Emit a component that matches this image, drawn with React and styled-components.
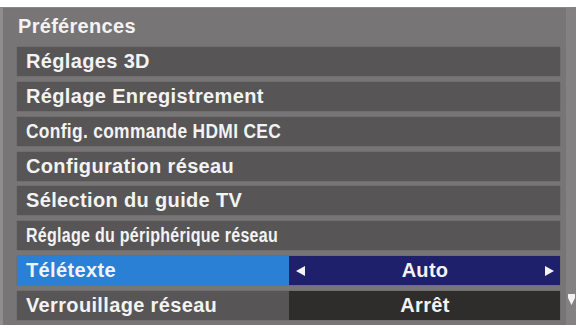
import React from "react";
import styled, { createGlobalStyle } from "styled-components";

const Global = createGlobalStyle`
  html, body { margin: 0; padding: 0; background: #ffffff; }
  body { width: 576px; height: 329px; overflow: hidden; }
  * { box-sizing: border-box; }
`;

const Screen = styled.div`
  position: relative;
  margin-top: 7px;
  width: 576px;
  height: 318px;
  background: #777575;
  border-left: 3px solid #8f8d8d;
  border-right: 10px solid #838181;
  border-top: 1px solid #8a8888;
  padding: 0 6px 0 14px;
  font-family: "Liberation Sans", Arial, Helvetica, sans-serif;
  font-weight: 700;
  color: #f3f3f3;
`;

const Title = styled.div`
  height: 39px;
  display: flex;
  align-items: center;
  padding: 0 0 3px 1px;
  font-size: 20px;
  letter-spacing: 0.3px;
`;

const List = styled.div`
  display: flex;
  flex-direction: column;
  gap: 5.85px;
`;

const Row = styled.div`
  height: 29px;
  display: grid;
  grid-template-columns: ${(p) => (p.$split ? "272px 1fr" : "1fr")};
  background: ${(p) => (p.$active ? "#2a7fd3" : "#575555")};
  box-shadow: 0 0 1px rgba(0, 0, 0, 0.35);
`;

const Label = styled.div`
  display: flex;
  align-items: center;
  padding-left: 9px;
  font-size: 20px;
  letter-spacing: 0.35px;
  white-space: nowrap;
  background: ${(p) => (p.$active ? "#2a80d5" : "transparent")};
`;

const LabelText = styled.span`
  display: inline-block;
  transform: scaleX(${(p) => p.$squeeze || 1});
  transform-origin: left center;
`;

const Value = styled.div`
  display: flex;
  align-items: center;
  justify-content: space-between;
  padding: 0 6px 0 7px;
  font-size: 20px;
  letter-spacing: 0.3px;
  background: ${(p) => (p.$active ? "#1f206c" : "#2f2d2b")};
`;

const ValueText = styled.span`
  flex: 1;
  text-align: center;
`;

const Arrow = styled.svg`
  width: 9px;
  height: 10px;
  flex: none;
`;

const Spacer = styled.span`
  width: 9px;
  flex: none;
`;

const ScrollHint = styled.svg`
  position: absolute;
  right: -9px;
  top: 286px;
  width: 7px;
  height: 11px;
`;

const items = [
  { label: "Réglages 3D" },
  { label: "Réglage Enregistrement" },
  { label: "Config. commande HDMI CEC", squeeze: 0.87 },
  { label: "Configuration réseau" },
  { label: "Sélection du guide TV" },
  { label: "Réglage du périphérique réseau", squeeze: 0.8 },
  { label: "Télétexte", value: "Auto", active: true },
  { label: "Verrouillage réseau", value: "Arrêt" },
];

export default function App() {
  return (
    <>
      <Global />
      <Screen>
        <Title>Préférences</Title>
        <List>
          {items.map((it) => (
            <Row key={it.label} $split={!!it.value} $active={it.active}>
              <Label $active={it.active}>
                <LabelText $squeeze={it.squeeze}>{it.label}</LabelText>
              </Label>
              {it.value && (
                <Value $active={it.active}>
                  {it.active ? (
                    <Arrow viewBox="0 0 9 10">
                      <polygon points="9,0 9,10 0,5" fill="#f4f4f4" />
                    </Arrow>
                  ) : (
                    <Spacer />
                  )}
                  <ValueText>{it.value}</ValueText>
                  {it.active ? (
                    <Arrow viewBox="0 0 9 10">
                      <polygon points="0,0 0,10 9,5" fill="#f4f4f4" />
                    </Arrow>
                  ) : (
                    <Spacer />
                  )}
                </Value>
              )}
            </Row>
          ))}
        </List>
        <ScrollHint viewBox="0 0 7 11">
          <polygon points="0,0 7,0 7,4 3.5,11 0,4" fill="#f2f2f2" />
        </ScrollHint>
      </Screen>
    </>
  );
}
